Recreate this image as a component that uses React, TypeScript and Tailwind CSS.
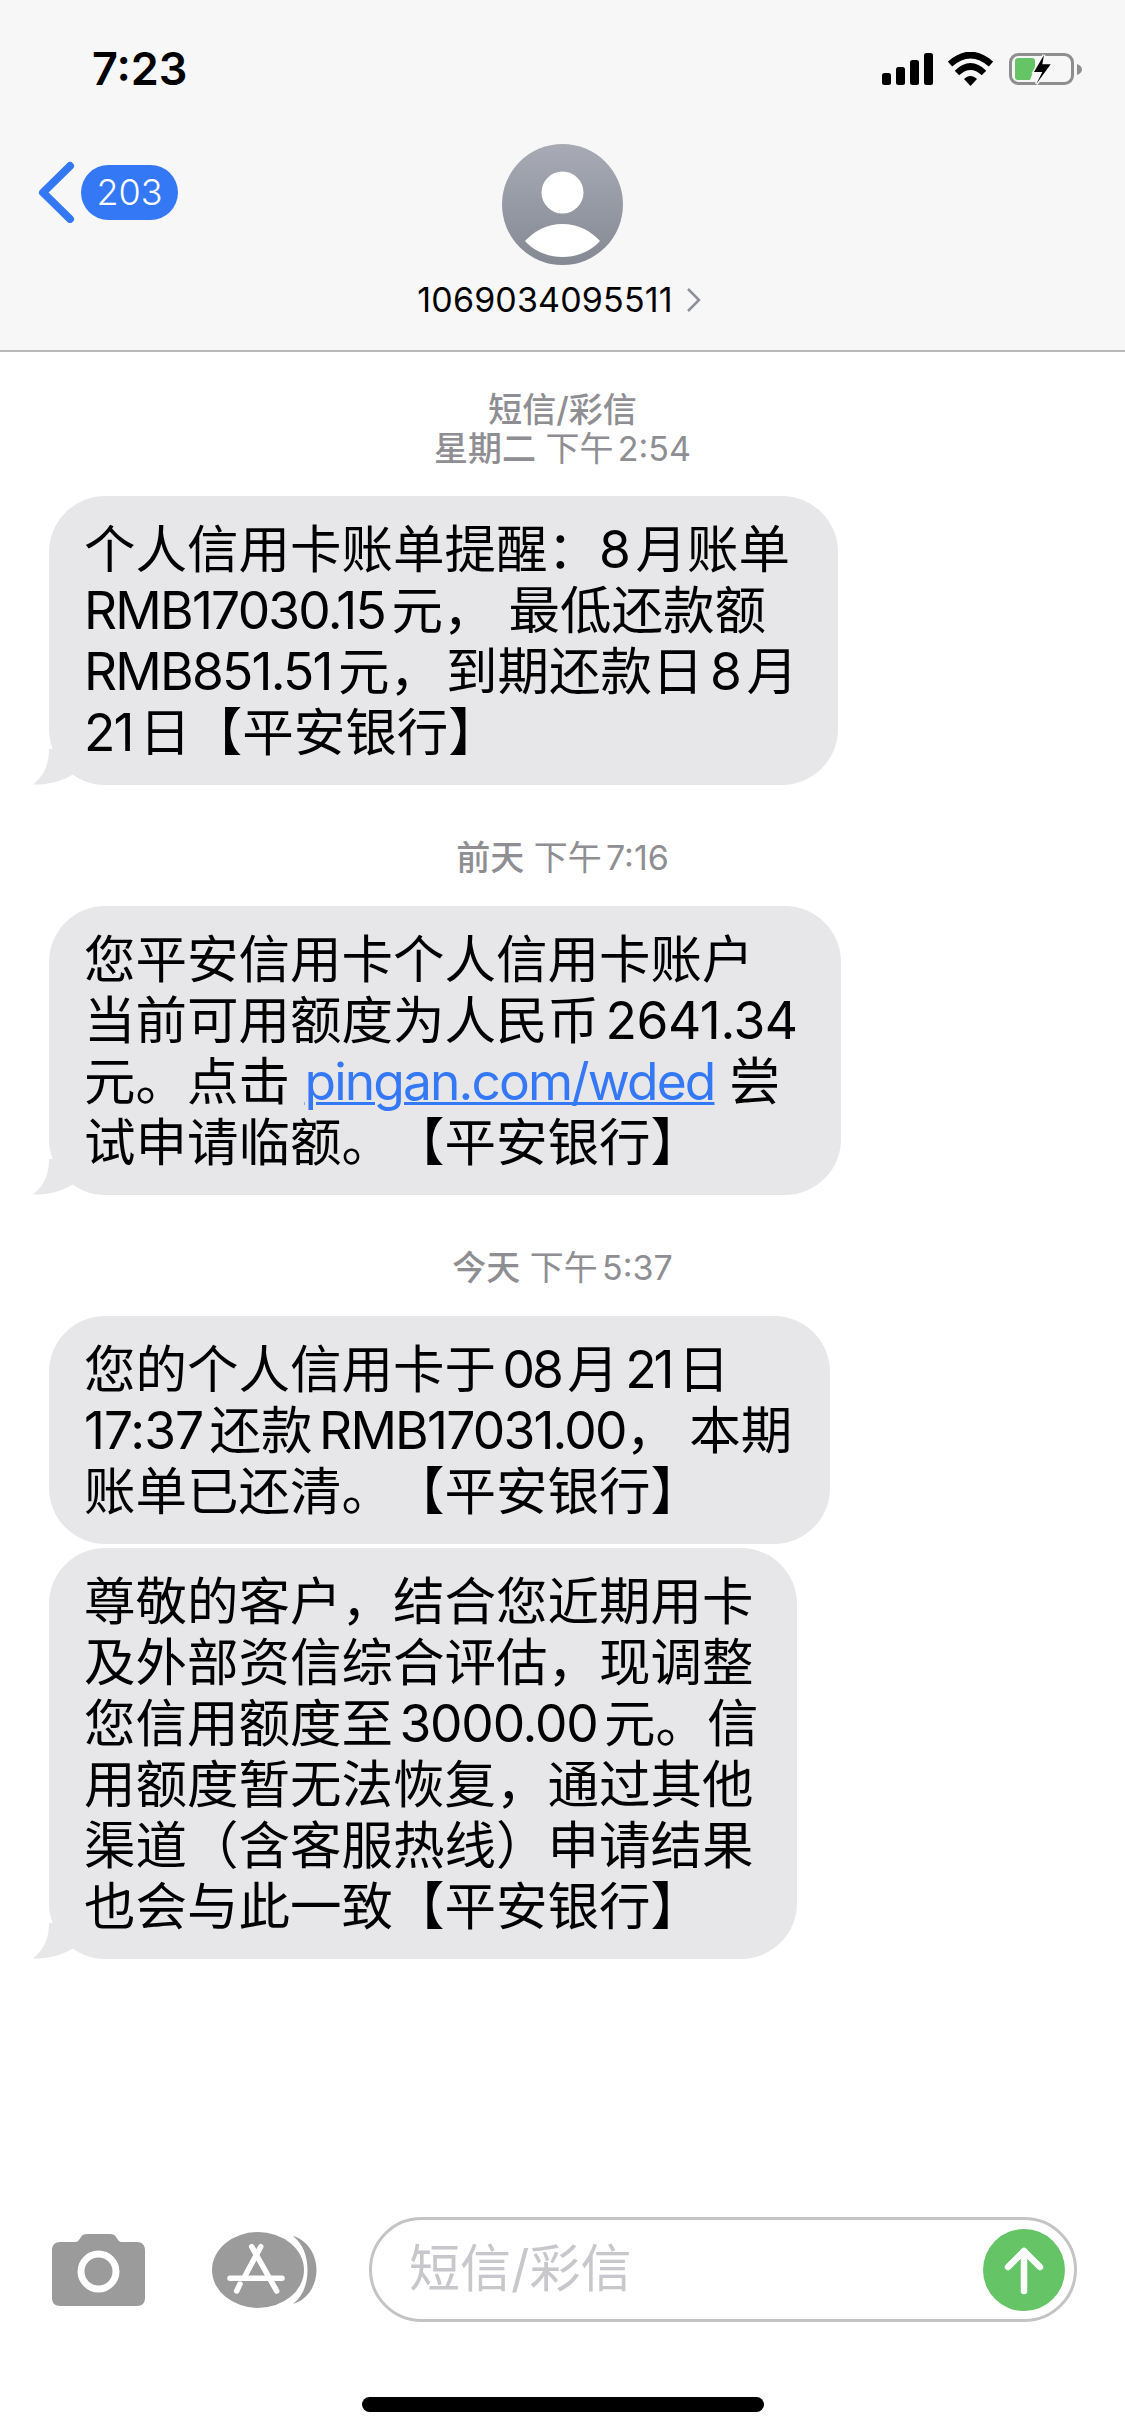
const Tail = () => (
  <svg className="absolute left-[-16px] bottom-0" width="62" height="36" viewBox="0 0 62 36">
    <path d="M16 0C16 14 12 26 0 35.5C13 36 27 33 39 26L62 0Z" fill="#e7e7e9" />
  </svg>
);

const Stamp = ({ children }: { children: React.ReactNode }) => (
  <div className="text-center text-[34px] leading-[39px] text-[#8e8e93] [text-autospace:normal]">{children}</div>
);

// latin runs sit tighter than the CJK around them
const L = ({ t = 'tracking-[-1.8px]', children }: { t?: string; children: React.ReactNode }) => (
  <span className={t}>{children}</span>
);

// comma after a latin run or 元 has more room in the reference
const Comma = ({ m }: { m: string }) => <span className={m}>，</span>;

const Bubble = ({
  width,
  tail,
  children,
}: {
  width: string;
  tail?: boolean;
  children: React.ReactNode;
}) => (
  <div className={`relative ml-[49px] ${width} rounded-[56px] bg-[#e7e7e9] pb-[22px] pl-[35px] pr-[20px] pt-[23px] text-[51.5px] leading-[61px] text-black`}>
    {tail && <Tail />}
    <div className="relative whitespace-nowrap [text-autospace:normal] [text-spacing-trim:space-all]">{children}</div>
  </div>
);

export default function App() {
  return (
    <div className="flex h-[2436px] w-[1125px] flex-col overflow-hidden bg-white font-['Inter','Noto_Sans_CJK_SC',sans-serif]">
      {/* Nav header */}
      <header className="relative h-[352px] shrink-0 border-b-2 border-[#b8b8ba] bg-[#f7f7f7]">
        <div className="flex items-center justify-between pl-[92px] pr-[43px] pt-[45px]">
          <span className="text-[45px] leading-[48px] font-semibold text-black">7:23</span>
          <div className="flex items-center gap-[14px]">
            <svg width="52" height="32" viewBox="0 0 52 32" fill="#000">
              <rect x="0" y="20" width="9" height="12" rx="2.5" />
              <rect x="14" y="14" width="9" height="18" rx="2.5" />
              <rect x="28" y="7" width="9" height="25" rx="2.5" />
              <rect x="42" y="0" width="9" height="32" rx="2.5" />
            </svg>
            <svg className="mr-[2px]" width="45" height="34" viewBox="0 0 45 34" fill="none" stroke="#000">
              <path d="M2 12Q22.5 -6 43 12" strokeWidth="6.5" />
              <path d="M9 21Q22.5 8 36 21" strokeWidth="6.5" />
              <path d="M16 27L22.5 34L29 27C25 23 20 23 16 27Z" fill="#000" stroke="none" />
            </svg>
            <svg width="73" height="34" viewBox="0 0 73 34" fill="none">
              <rect x="1.5" y="2.5" width="62" height="29" rx="8" stroke="#8e8e8e" strokeWidth="3" />
              <path d="M9 6H23C25 6 26 7 26 9V15L21 28H9C7 28 6 27 6 25V9C6 7 7 6 9 6Z" fill="#65c466" />
              <path d="M68 12C71 13 73 15 73 17.5C73 20 71 22 68 23Z" fill="#8e8e8e" />
              <path d="M35 3L25 20H33.3L27.3 32L41.7 12.3H33.3L35 3Z" fill="#000" stroke="#f7f7f7" strokeWidth="3" paintOrder="stroke" />
            </svg>
          </div>
        </div>

        <div className="absolute left-[38px] top-[161px] flex items-center gap-[6px]">
          <svg width="37" height="62" viewBox="0 0 37 62" fill="none">
            <path d="M32 5L5 31.5L32 58" stroke="#3478f6" strokeWidth="8" strokeLinecap="round" strokeLinejoin="round" />
          </svg>
          <div className="flex h-[55px] w-[97px] items-center justify-center rounded-full bg-[#3478f6] text-[36px] font-light text-white">
            203
          </div>
        </div>

        <div className="flex flex-col items-center pt-[51px]">
          <svg width="121" height="121" viewBox="0 0 121 121">
            <defs>
              <linearGradient id="avatar" x1="0" y1="0" x2="0" y2="1">
                <stop offset="0" stopColor="#a8abb6" />
                <stop offset="1" stopColor="#858994" />
              </linearGradient>
            </defs>
            <circle cx="60.5" cy="60.5" r="60.5" fill="url(#avatar)" />
            <circle cx="60.5" cy="48.5" r="21" fill="#fff" />
            <path d="M23 97C32 87 45 80 60.5 80C76 80 89 87 98 97C89 107 76 113 60.5 113C45 113 32 107 23 97Z" fill="#fff" />
          </svg>
          <div className="mr-[7px] mt-[15px] flex items-center gap-[13px]">
            <span className="text-[34px] leading-[40px] tracking-[0.15px] text-black">1069034095511</span>
            <svg width="15" height="24" viewBox="0 0 15 24" fill="none">
              <path d="M2 1L13 12L2 23" stroke="#8a8f99" strokeWidth="2.5" />
            </svg>
          </div>
        </div>
      </header>

      {/* Conversation */}
      <main className="flex-1 pt-[38px]">
        <Stamp>
          <span className="font-medium">短信/彩信</span>
          <br />
          <span className="font-medium">星期二</span> 下午2:54
        </Stamp>
        <div className="mt-[28px]">
          <Bubble width="w-[789px]" tail>
            个人信用卡账单提醒：<L>8</L>月账单
            <br />
            <L>RMB17030.15</L>元<Comma m="mr-[14px]" />最低还款额
            <br />
            <L>RMB851.51</L>元<Comma m="mr-[5px]" />到期还款日<L>8</L>月
            <br />
            <L>21</L>日【平安银行】
          </Bubble>
        </div>

        <div className="mt-[53px]">
          <Stamp>
            <span className="font-medium">前天</span> 下午7:16
          </Stamp>
        </div>
        <div className="mt-[29px]">
          <Bubble width="w-[792px]" tail>
            您平安信用卡个人信用卡账户
            <br />
            当前可用额度为人民币<L t="tracking-[-0.4px]">2641.34</L>
            <br />
            元。点击 <span className="tracking-[-1.9px] text-[#3478f6] underline decoration-[3px]">pingan.com/wded</span> 尝
            <br />
            试申请临额。【平安银行】
          </Bubble>
        </div>

        <div className="mt-[53px]">
          <Stamp>
            <span className="font-medium">今天</span> 下午5:37
          </Stamp>
        </div>
        <div className="mt-[29px]">
          <Bubble width="w-[781px]">
            您的个人信用卡于<L t="tracking-[-3px]">08</L>月<L t="tracking-[-3px]">21</L>日
            <br />
            <L t="tracking-[-1px]">17:37</L>还款<L>RMB17031.00</L>
            <Comma m="mr-[12px]" />本期
            <br />
            账单已还清。【平安银行】
          </Bubble>
        </div>
        <div className="mt-[4px]">
          <Bubble width="w-[748px]" tail>
            尊敬的客户，结合您近期用卡
            <br />
            及外部资信综合评估，现调整
            <br />
            您信用额度至<L t="tracking-[-1.2px]">3000.00</L>元。信
            <br />
            用额度暂无法恢复，通过其他
            <br />
            渠道（含客服热线）申请结果
            <br />
            也会与此一致【平安银行】
          </Bubble>
        </div>
      </main>

      {/* Input bar */}
      <footer className="flex h-[105px] shrink-0 items-center pl-[52px] pr-[48px]">
        <svg width="94" height="74" viewBox="0 0 94 74">
          <path
            fillRule="evenodd"
            d="M8 9H23C26 9 27 7 29 4C30 2 32 1 35 1H58C61 1 63 2 64 4C66 7 67 9 70 9H85C90 9 93 12 93 17V65C93 70 90 73 85 73H8C3 73 0 70 0 65V17C0 12 3 9 8 9ZM46.5 17.5A21 21 0 1 0 46.5 59.5A21 21 0 1 0 46.5 17.5ZM46.5 24.5A14 14 0 1 1 46.5 52.5A14 14 0 1 1 46.5 24.5Z"
            fill="#9b9b9b"
          />
        </svg>
        <svg className="ml-[66px] shrink-0" width="105" height="76" viewBox="0 0 105 76">
          <path d="M81 4C91 12 95.5 24 95.5 38C95.5 52 91 64 81 72C95 68 104.5 54 104.5 38C104.5 22 95 8 81 4Z" fill="#9b9b9b" />
          <ellipse cx="46" cy="38" rx="46" ry="38" fill="#9b9b9b" />
          <g stroke="#fff" strokeWidth="5.5" strokeLinecap="round" fill="none">
            <path d="M39.7 14.7L64.7 59" />
            <path d="M48.7 14.7L33 44" />
            <path d="M28 52L24.7 59" />
            <path d="M18 46.3H70" />
          </g>
        </svg>
        <div className="ml-[52px] flex h-[105px] flex-1 items-center justify-between rounded-full border-[3px] border-[#c4c4c6] pl-[37px] pr-[9px]">
          <span className="text-[51px] text-[#c7c7cc]">短信/彩信</span>
          <div className="flex h-[82px] w-[82px] items-center justify-center rounded-full bg-[#65c466]">
            <svg width="44" height="50" viewBox="0 0 44 50" fill="none">
              <path d="M22 46V6M6 22L22 6L38 22" stroke="#fff" strokeWidth="6.5" strokeLinecap="round" strokeLinejoin="round" />
            </svg>
          </div>
        </div>
      </footer>

      <div className="flex h-[114px] shrink-0 justify-center pt-[75px]">
        <div className="h-[15px] w-[402px] rounded-full bg-black" />
      </div>
    </div>
  );
}
